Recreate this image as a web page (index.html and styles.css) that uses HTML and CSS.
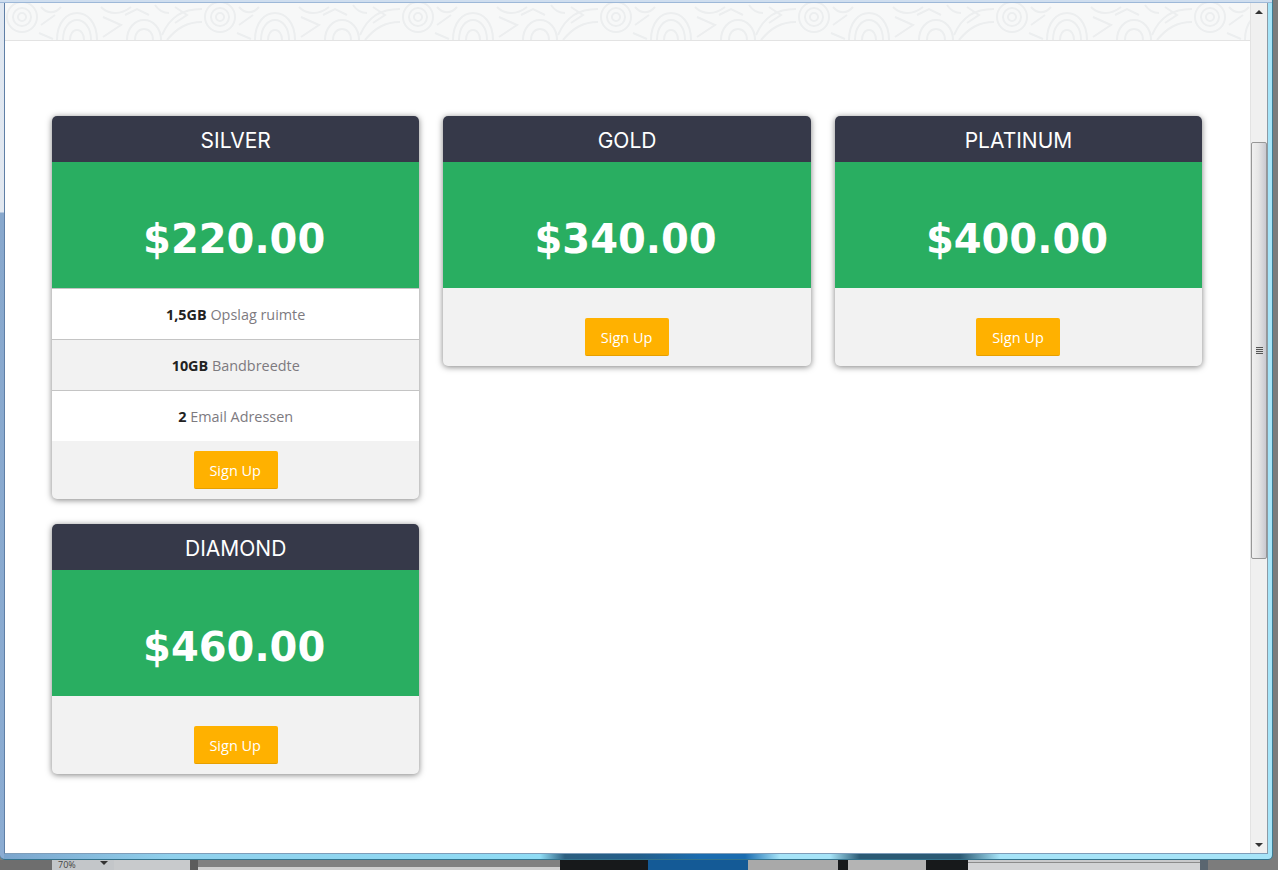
FILE: index.html
```html
<!DOCTYPE html>
<html lang="nl">
<head>
<meta charset="utf-8">
<title>Pricing</title>
<link rel="stylesheet" href="styles.css">
</head>
<body>
<div class="desktop">
  <div class="window">
    <div class="viewport">
      <div class="page">
        <div class="banner">
          <svg class="banner-art" width="100%" height="37" aria-hidden="true">
            <defs>
              <pattern id="lace" width="198" height="37" patternUnits="userSpaceOnUse">
                <g fill="none" stroke="#eceeef" stroke-width="2">
                  <circle cx="17" cy="14" r="15"/><circle cx="17" cy="14" r="9"/><circle cx="17" cy="14" r="4"/>
                  <path d="M52 37c0-18 10-27 20-27s20 9 20 27"/><path d="M58 37c0-13 7-20 14-20s14 7 14 20"/><path d="M65 37c0-6 3-10 7-10s7 4 7 10"/>
                  <path d="M122 37c0-12 8-20 17-20s17 8 17 20"/><path d="M130 37c0-7 4-11 9-11s9 4 9 11"/>
                  <path d="M157 32c8-18 20-26 40-26M162 37c10-12 20-18 35-18"/><path d="M170 4l12 8-12 8"/>
                  <path d="M36 4c6 7 14 7 20 0M36 22l14-10M34 30l14 6M96 4c8 8 20 8 30 0M98 14l18 8-18 12M120 12l12-6 12 6M150 2c4 6 8 8 14 8"/>
                </g>
              </pattern>
            </defs>
            <rect width="100%" height="37" fill="#f7f8f8"/>
            <rect width="100%" height="37" fill="url(#lace)"/>
          </svg>
        </div>
        <main class="plans">
          <article class="plan">
            <h2 class="plan-name">SILVER</h2>
            <div class="plan-price">$220.00</div>
            <ul class="features">
              <li><b>1,5GB</b> Opslag ruimte</li>
              <li><b>10GB</b> Bandbreedte</li>
              <li><b>2</b> Email Adressen</li>
            </ul>
            <div class="plan-foot plan-foot-tight"><a class="signup" href="#">Sign Up</a></div>
          </article>
          <article class="plan">
            <h2 class="plan-name">GOLD</h2>
            <div class="plan-price">$340.00</div>
            <div class="plan-foot"><a class="signup" href="#">Sign Up</a></div>
          </article>
          <article class="plan">
            <h2 class="plan-name">PLATINUM</h2>
            <div class="plan-price">$400.00</div>
            <div class="plan-foot"><a class="signup" href="#">Sign Up</a></div>
          </article>
          <article class="plan">
            <h2 class="plan-name">DIAMOND</h2>
            <div class="plan-price">$460.00</div>
            <div class="plan-foot"><a class="signup" href="#">Sign Up</a></div>
          </article>
        </main>
      </div>
      <div class="scrollbar" aria-hidden="true">
        <div class="arrow-btn"><span class="arrow-up"></span></div>
        <div class="track">
          <div class="thumb"><span class="grip"></span></div>
        </div>
        <div class="arrow-btn"><span class="arrow-down"></span></div>
      </div>
    </div>
  </div>
  <div class="taskstrip" aria-hidden="true">
    <span class="strip s-grey"></span>
    <span class="zoombox"><span class="zoomval">70%</span><span class="arrow-down"></span></span>
    <span class="strip s-mid"></span>
    <span class="strip s-rule"></span>
    <span class="strip s-long"></span>
    <span class="strip s-black"></span>
    <span class="strip s-blue"></span>
    <span class="strip s-light"></span>
    <span class="strip s-black2"></span>
    <span class="strip s-light2"></span>
    <span class="strip s-black3"></span>
    <span class="strip s-panel"></span>
    <span class="strip s-rule2"></span>
  </div>
</div>
</body>
</html>
```
FILE: styles.css
```css
* { box-sizing: border-box; }
html, body { margin: 0; height: 100%; overflow: hidden; }
body { font-family: "Open Sans", "Liberation Sans", sans-serif; background: #7c7c7c; }
.desktop { width: 1278px; height: 870px; display: flex; flex-direction: column; background: #7c7c7c; }
.window {
  width: 1273px; height: 860px; flex: none;
  padding: 3px 4px 5px 5px;
  background:
    linear-gradient(#cfdeef, #cfdeef) top / 100% 2px no-repeat,
    linear-gradient(#9db8d8, #9db8d8) 0 2px / 100% 1px no-repeat,
    linear-gradient(180deg, #dfe7f1 0, #e2e8f0 212px, #88a8cd 213px, #8bacd2 100%) left / 4px 100% no-repeat,
    linear-gradient(90deg, #7ba4cc 0, #8fd0ec 170px, #8fdcf5 540px, #2c5f80 565px, #235f8c 640px, #1a6cb0 700px, #1a6cb0 745px, #a6e4f8 780px, #a6e4f8 830px, #2b5a74 860px, #2b5a74 960px, #a6e4f8 1000px, #a6e4f8 100%);
  border-radius: 0 0 5px 5px;
  border-right: 1px solid #3e7f97;
  border-bottom: 1px solid #33728c;
}
.viewport { height: 100%; display: flex; background: #fff; border-left: 1px solid #5f7fa6; border-bottom: 1px solid #7f9db9; border-right: 1px solid #8b9aa5; margin-left: -1px; }
.page { flex: 1; min-width: 0; }
.banner { height: 38px; border-bottom: 1px solid #e3e3e3; }
.banner-art { display: block; }
.plans { display: grid; grid-template-columns: repeat(3, 367.4px); column-gap: 24px; row-gap: 25px; align-items: start; padding: 75px 0 0 47px; }
.plan { border-radius: 5px; box-shadow: 0 1px 6px rgba(0,0,0,.5); background: #f2f2f2; overflow: hidden; }
.plan-name { margin: 0; height: 46px; background: #363949; color: #fff; font: 400 21px/49px "Inter", "Liberation Sans", sans-serif; text-align: center; }
.plan-price { height: 126px; padding-right: 3px; background: #29ae61; color: #fff; font: 700 40px/154px "DejaVu Sans", sans-serif; text-align: center; }
.features { list-style: none; margin: 0; padding: 0; }
.features li { height: 51px; border-top: 1px solid #c4c4c4; font-size: 14.4px; line-height: 51px; color: #7d7a7f; text-align: center; background: #fff; }
.features li:nth-child(2) { background: #f2f2f2; }
.features b { color: #222; font-weight: 700; }
.plan-foot { height: 78px; padding-top: 30px; text-align: center; }
.plan-foot-tight { height: 58px; padding-top: 10px; }
.signup { display: inline-block; width: 84px; height: 38px; padding-right: 1px; background: #ffb100; border-radius: 2px; border-bottom: 1px solid #e69f00; color: #fff; font-size: 14.5px; line-height: 39px; text-decoration: none; }
.scrollbar { width: 17px; flex: none; display: flex; flex-direction: column; background: #f0f0f0; border-left: 1px solid #e3e3e3; }
.arrow-btn { height: 17px; flex: none; display: flex; align-items: center; justify-content: center; }
.arrow-up, .arrow-down { display: inline-block; width: 0; height: 0; border-left: 4px solid transparent; border-right: 4px solid transparent; }
.arrow-up { border-bottom: 4px solid #333; }
.arrow-down { border-top: 4px solid #333; }
.track { flex: 1; padding-top: 122px; }
.thumb { height: 417px; border: 1px solid #979797; border-radius: 2px; background: linear-gradient(90deg, #f0f0f0 0, #e6e6e6 45%, #c9c9d0 100%); display: flex; align-items: center; justify-content: center; }
.grip { width: 7px; height: 7px; background: repeating-linear-gradient(180deg, #555 0 1px, #ddd 1px 2px); }
.taskstrip { flex: 1; display: flex; align-items: stretch; overflow: hidden; font-size: 9px; color: #444; }
.strip { display: block; flex: none; }
.s-grey { width: 52px; background: #6e6e6e; }
.zoombox { width: 62px; flex: none; background: #c3c6c9; display: flex; justify-content: space-between; padding: 0 6px 0 6px; }
.zoomval { line-height: 10px; }
.zoombox .arrow-down { margin-top: 1px; }
.s-mid { width: 76px; background: #c8cacc; }
.s-rule { width: 8px; background: #5c5c5c; }
.s-long { width: 362px; background: linear-gradient(180deg, #808080 0 7px, #cfcfcf 7px); }
.s-black { width: 88px; background: #17191b; }
.s-blue { width: 100px; background: #145a96; }
.s-light { width: 90px; background: #a9a9a9; }
.s-black2 { width: 10px; background: #17191b; }
.s-light2 { width: 78px; background: #b4b4b4; }
.s-black3 { width: 42px; background: #17191b; }
.s-panel { width: 232px; background: linear-gradient(180deg, #c9cacc 0 2px, #8c8c8c 2px 3px, #d2d3d5 3px); }
.s-rule2 { width: 8px; background: #5a6670; }
```
